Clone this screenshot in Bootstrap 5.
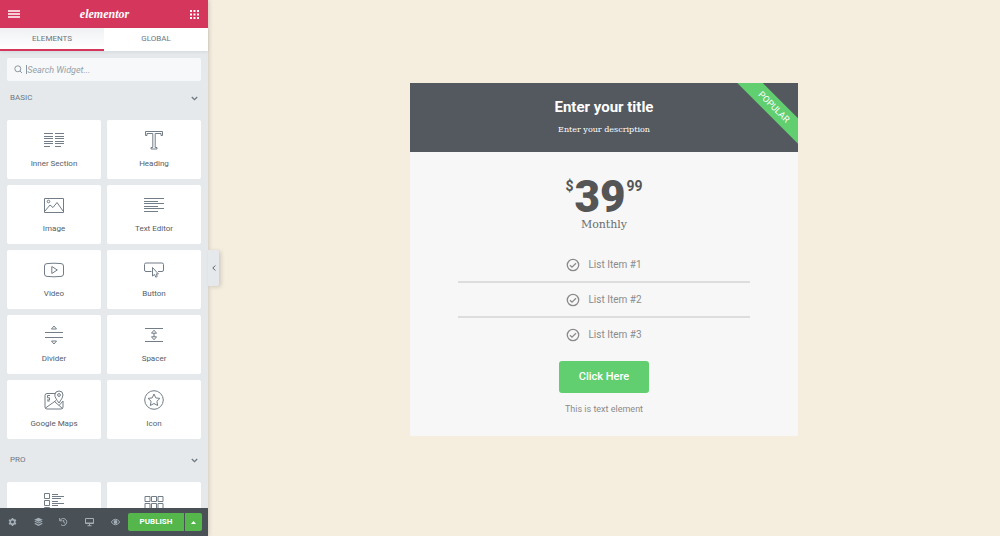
<!DOCTYPE html>
<html lang="en">
<head>
<meta charset="utf-8">
<meta name="viewport" content="width=device-width, initial-scale=1">
<title>Elementor</title>
<link href="https://cdn.jsdelivr.net/npm/bootstrap@5.3.0/dist/css/bootstrap.min.css" rel="stylesheet">
<style>
  body { font-family: Roboto, sans-serif; background: #f5eedf; color: #556068; font-size: 8px; line-height: 12px; }
  svg { display: block; fill: none; stroke: currentColor; }
  .solid { fill: currentColor; stroke: none; }
  .panel { width: 208px; background: #e6e9ec; box-shadow: 0 0 5px rgba(0,0,0,.22); z-index: 2; }
  .panel-top { height: 28px; background: #d5365c; padding: 0 8px; color: #fff; }
  .brand { font: italic 700 12px/20px "Liberation Serif", serif; color: #fff; }
  .plain { background: none; border: 0; padding: 0; color: inherit; }
  .panel-tabs { height: 23px; background: #fff; box-shadow: 0 1px 3px rgba(0,0,0,.08); }
  .panel-tabs .nav-link { padding: 4px 0; border-bottom: 2px solid transparent; border-radius: 0; color: #6d7882; line-height: 13px; height: 23px; }
  .panel-tabs .nav-link.active { border-color: #d5365c; background: linear-gradient(#eff1f3, #fff); }
  .panel-body { min-height: 0; }
  .search { margin: 7px 7px 5px; height: 23px; background: #f7f8fa; border-radius: 2px; padding: 0 7px; color: #8c989f; }
  .search input { font-size: 9px; line-height: 12px; padding: 0; border: 0; background: none; font-style: italic; color: #556068; }
  .search input:focus { background: none; box-shadow: none; }
  .search input::placeholder { color: #95a1a9; }
  .caret { width: 1px; height: 9px; background: #8c989f; }
  .category { height: 24px; padding: 0 10px; color: #6d7882; width: 100%; }
  .widgets { display: grid; grid-template-columns: 1fr 1fr; gap: 6px; padding: 10px 7px 9px; }
  .widget { height: 59px; background: #fff; border: 0; border-radius: 2px; padding: 9px 0 0; color: #556068; display: flex; flex-direction: column; align-items: center; gap: 7px; }
  .widget svg { color: #727d87; }
  .panel-foot { height: 28px; background: #495157; padding-right: 6px; color: #a4afb7; }
  .publish, .more { background: #54b64b; color: #fff; border: 0; height: 18px; font-weight: 700; font-size: 8px; line-height: 12px; padding: 0; }
  .publish { width: 56px; border-radius: 2px 0 0 2px; }
  .more { width: 17px; border-radius: 0 2px 2px 0; margin-left: 1px; }
  .collapser { left: 100%; top: 250px; width: 11px; height: 36px; background: #e6e9ec; border-radius: 0 2px 2px 0; box-shadow: 2px 1px 4px rgba(0,0,0,.15); }
  .canvas { padding-top: 83px; }
  .price-box { width: 49%; background: #f7f7f7; color: #8b8b8b; }
  .price-head { background: #54595f; color: #fff; padding: 14px 0 16px; }
  .price-head h1 { font-size: 15px; line-height: 20px; font-weight: 700; margin: 0 0 6px; }
  .slab { font-family: "DejaVu Serif", serif; }
  .desc { font-size: 8px; line-height: 13px; margin: 0; }
  .ribbon { right: 0; top: 0; width: 70px; height: 70px; }
  .ribbon span { position: absolute; width: 120px; left: -14px; top: 15px; line-height: 18px; font-size: 9px; background: #61ce70; color: #fff; transform: rotate(45deg); text-align: center; }
  .amount { padding-top: 24px; color: #555; font-weight: 700; font-size: 14px; line-height: 20px; }
  .amount strong { font-size: 44px; line-height: 42px; margin: 0 1px; }
  .period { font-size: 11px; line-height: 15px; color: #6a6d70; margin: -1px 0 16px; }
  .features { width: 75%; font-size: 10px; line-height: 15px; }
  .features li { height: 33px; }
  .features li + li { height: 35px; border-top: 2px solid #ddd; }
  .cta { background: #61ce70; color: #fff; border: 0; border-radius: 3px; width: 90px; height: 32px; font-size: 11px; line-height: 16px; font-weight: 500; padding: 0; margin-top: 10px; }
  .note { font-size: 9px; line-height: 14px; margin: 9px 0 0; padding-bottom: 20px; }
</style>
</head>
<body>
<div class="d-flex vh-100 overflow-hidden">
  <aside class="panel position-relative d-flex flex-column flex-shrink-0">
    <header class="panel-top d-flex align-items-center justify-content-between flex-shrink-0">
      <button class="plain" aria-label="Menu"><svg width="12" height="10" stroke-width="1.5"><path d="M0 2h12M0 5h12M0 8h12"/></svg></button>
      <a class="brand text-decoration-none" href="#">elementor</a>
      <button class="plain" aria-label="Widgets"><svg class="solid" width="11" height="10"><path d="M1 1h2v2H1zM4.5 1h2v2h-2zM8 1h2v2H8zM1 4.5h2v2H1zM4.5 4.5h2v2h-2zM8 4.5h2v2H8zM1 8h2v2H1zM4.5 8h2v2h-2zM8 8h2v2H8z"/></svg></button>
    </header>
    <nav class="panel-tabs nav nav-fill flex-nowrap flex-shrink-0">
      <a class="nav-link w-50 active" href="#">ELEMENTS</a>
      <a class="nav-link w-50" href="#">GLOBAL</a>
    </nav>
    <div class="panel-body flex-fill overflow-hidden">
      <label class="search d-flex align-items-center">
        <svg class="me-1" width="9" height="9"><circle cx="3.8" cy="3.8" r="3"/><path d="M6 6l2.500 2.500"/></svg>
        <span class="caret"></span>
        <input class="form-control" type="text" placeholder="Search Widget..." aria-label="Search Widget">
      </label>
      <button class="plain category d-flex align-items-center justify-content-between">BASIC <svg width="7" height="5" stroke-width="1.3"><path d="M.8 1l2.700 2.700L6.200 1"/></svg></button>
      <div class="widgets">
        <button class="widget"><svg width="20" height="22"><path d="M0 4.500h9M0 7.500h9M0 9.500h9M0 12.500h9M0 14.500h9M0 17.500h6M11 4.500h9M11 7.500h9M11 9.500h9M11 12.500h9M11 14.500h9M11 17.500h6"/></svg>Inner Section</button>
        <button class="widget"><svg width="20" height="22"><path d="M1.500 2.500h17v4h-1.500v-2H11.200v14h1.800v1.500H7v-1.500h1.800v-14H3v2H1.500z"/></svg>Heading</button>
        <button class="widget"><svg width="20" height="22"><path d="M.5 4.500h19v14H.5zM1 17l5-6 3 2.500 4-5L19 17"/><circle cx="4.500" cy="7.500" r="1.300"/></svg>Image</button>
        <button class="widget"><svg width="20" height="22"><path d="M0 4.500h20M0 7.500h14M0 9.500h20M0 12.500h14M0 14.500h20M0 17.500h14"/></svg>Text Editor</button>
        <button class="widget"><svg width="20" height="22"><path d="M3 4.600Q10 3.800 17 4.600Q19.500 4.600 19.500 7V15Q19.500 17.400 17 17.400Q10 18.200 3 17.400Q.5 17.400 .5 15V7Q.5 4.600 3 4.600zM7.800 7.500v7l5.500-3.500z"/></svg>Video</button>
        <button class="widget"><svg width="20" height="22"><path d="M7.500 12.500H2Q.5 12.500.5 11V5.500Q.5 4 2 4H18Q19.500 4 19.500 5.500V11Q19.500 12.500 18 12.500H14"/><path d="M8.500 8.500v8.500l2-1.500 1.300 2.700 1.500-.8-1.200-2.400h2.300z"/></svg>Button</button>
        <button class="widget"><svg width="20" height="22"><path d="M1 8.500h18M1 13.500h18M7.500 5h5L10 2zM7.500 17h5L10 20z"/></svg>Divider</button>
        <button class="widget"><svg width="20" height="22"><path d="M1 4.500h18M1 17.500h18M7.500 9.200h5L10 6.200zM7.500 12.800h5L10 15.800zM10 9v4"/></svg>Spacer</button>
        <button class="widget"><svg width="20" height="22"><path d="M11 4.500H3Q1 4.500 1 6.500V18Q1 20 3 20H17Q19 20 19 18V12M1.500 19L12 11.500M10.500 12.500L18.500 19.500M15 16.500L19 12M15 14Q10.800 8.500 10.800 6Q11 2 15 2Q19 2 19 6Q19 8.500 15 14z"/><circle cx="15" cy="6" r="1.400"/><path d="M6 6.500H3.500v2.300H5.500V11H3M3.300 12h2.300"/></svg>Google Maps</button>
        <button class="widget"><svg width="20" height="22"><circle cx="10" cy="11" r="9.300"/><path d="M10 5l1.800 3.900 4.100.5-3 2.900.8 4.200-3.700-2-3.700 2 .8-4.200-3-2.900 4.100-.5z"/></svg>Icon</button>
      </div>
      <button class="plain category d-flex align-items-center justify-content-between">PRO <svg width="7" height="5" stroke-width="1.3"><path d="M.8 1l2.700 2.700L6.200 1"/></svg></button>
      <div class="widgets">
        <button class="widget" aria-label="Posts"><svg width="20" height="22"><path d="M.5 2.500h5v5h-5zM.5 9.500h5v5h-5zM.5 16.500h5v5h-5zM8 3.500h6M8 5.500h12M8 7.500h9M8 10.500h6M8 12.500h12M8 14.500h6M8 17.500h6M8 19.500h12"/></svg></button>
        <button class="widget" aria-label="Portfolio"><svg width="20" height="22"><path d="M1 5.500h5v5H1zM7.500 5.500h5v5h-5zM14 5.500h5v5h-5zM1 12.500h5v5H1zM7.500 12.500h5v5h-5zM14 12.500h5v5h-5z"/></svg></button>
      </div>
    </div>
    <footer class="panel-foot d-flex align-items-center flex-shrink-0">
      <div class="d-flex flex-fill justify-content-around">
        <button class="plain" aria-label="Settings"><svg width="11" height="10"><circle cx="5.500" cy="5" r="2.300" stroke-width="1.700"/><path stroke-width="1.500" d="M5.500 1v1.500M5.500 7.500V9M2 3l1.300.7M7.700 6.300L9 7M2 7l1.300-.7M7.700 3.700L9 3"/></svg></button>
        <button class="plain" aria-label="Navigator"><svg class="solid" width="11" height="10"><path d="M5.500.8L9.800 2.800 5.500 4.800 1.200 2.800zM1.200 4.400l1.300-.5 3 1.500 3-1.500 1.300.5-4.300 2.200zM1.200 6.700l1.300-.6 3 1.500 3-1.500 1.300.6-4.300 2.200z"/></svg></button>
        <button class="plain" aria-label="History"><svg width="11" height="10"><path d="M2.200 3.300A3.500 3.500 0 1 1 3 7.700M1.700 1v2.800h2.800M5.700 3v2.300l1.500.9"/></svg></button>
        <button class="plain" aria-label="Responsive mode"><svg width="11" height="10"><path d="M1.500 1.500h8v5h-8zM3.500 8.700h4M5.500 6.500v2M1.500 6h8"/></svg></button>
        <button class="plain" aria-label="Preview"><svg width="11" height="10"><path d="M1.200 5Q5.500 -.5 9.800 5Q5.500 10.500 1.200 5z"/><circle class="solid" cx="5.500" cy="5" r="1.900"/></svg></button>
      </div>
      <button class="publish">PUBLISH</button>
      <button class="more d-flex align-items-center justify-content-center" aria-label="Save options"><svg class="solid" width="5" height="3"><path d="M0 3h5L2.500 0z"/></svg></button>
    </footer>
    <button class="plain collapser position-absolute d-flex align-items-center justify-content-center" aria-label="Hide panel"><svg width="4" height="6"><path d="M3.300.5L.8 3l2.500 2.500"/></svg></button>
  </aside>
  <main class="canvas flex-fill">
    <section class="price-box mx-auto position-relative text-center d-flex flex-column align-items-center">
      <div class="price-head w-100">
        <h1>Enter your title</h1>
        <p class="slab desc">Enter your description</p>
      </div>
      <div class="ribbon position-absolute overflow-hidden"><span>POPULAR</span></div>
      <div class="amount d-flex"><span>$</span><strong>39</strong><span>99</span></div>
      <p class="slab period">Monthly</p>
      <ul class="features list-unstyled mb-0">
        <li class="d-flex align-items-center justify-content-center gap-2"><svg width="14" height="14" stroke-width="1.3"><circle cx="7" cy="7" r="5.700"/><path d="M4 7.200l2 2 4-4"/></svg>List Item #1</li>
        <li class="d-flex align-items-center justify-content-center gap-2"><svg width="14" height="14" stroke-width="1.3"><circle cx="7" cy="7" r="5.700"/><path d="M4 7.200l2 2 4-4"/></svg>List Item #2</li>
        <li class="d-flex align-items-center justify-content-center gap-2"><svg width="14" height="14" stroke-width="1.3"><circle cx="7" cy="7" r="5.700"/><path d="M4 7.200l2 2 4-4"/></svg>List Item #3</li>
      </ul>
      <button class="cta">Click Here</button>
      <p class="note">This is text element</p>
    </section>
  </main>
</div>
<script src="https://cdn.jsdelivr.net/npm/bootstrap@5.3.0/dist/js/bootstrap.bundle.min.js"></script>
</body>
</html>
